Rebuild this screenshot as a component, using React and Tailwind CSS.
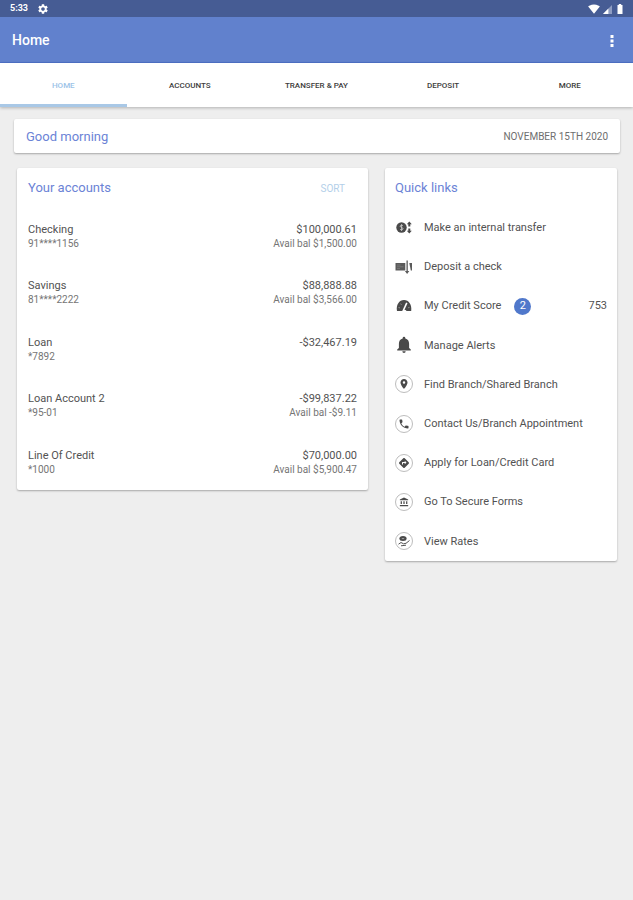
import React, { useState } from 'react';
import {
  MdAccountBalance,
  MdDirections,
  MdPhone,
  MdPlace,
  MdSettings,
  MdSignalWifi4Bar,
} from 'react-icons/md';

const tabs = ['Home', 'Accounts', 'Transfer & Pay', 'Deposit', 'More'];

const accounts = [
  { name: 'Checking', number: '91****1156', balance: '$100,000.61', available: '$1,500.00' },
  { name: 'Savings', number: '81****2222', balance: '$88,888.88', available: '$3,566.00' },
  { name: 'Loan', number: '*7892', balance: '-$32,467.19' },
  { name: 'Loan Account 2', number: '*95-01', balance: '-$99,837.22', available: '-$9.11' },
  { name: 'Line Of Credit', number: '*1000', balance: '$70,000.00', available: '$5,900.47' },
];

const SignalIcon = () => (
  <svg viewBox="0 0 10 10" className="size-[9px]">
    <path d="M10 0v10H0z" fill="#8f9dc2" />
    <path d="M6 4v6H0z" fill="#fff" />
  </svg>
);

const BatteryIcon = () => (
  <svg viewBox="0 0 6 10" className="h-[10px] w-[6px]" fill="#fff">
    <path d="M1.800 0h2.400v1H5.500v9h-5V1h1.300z" />
  </svg>
);

const MoreIcon = () => (
  <svg viewBox="0 0 4 12" className="h-3 w-1" fill="#fff">
    <path d="M.5 0h3v3h-3zM.5 4.500h3v3h-3zM.5 9h3v3h-3z" />
  </svg>
);

const TransferIcon = () => (
  <svg viewBox="0 0 18 18" className="size-[18px]" fill="#4a4a4a">
    <circle cx="6.5" cy="8.5" r="5.2" />
    <path d="M8 6.900C7.600 6 5.200 6 5.200 7.300s2.800 1 2.800 2.400-2.400 1.400-3 .4M6.600 5.200v6.800" fill="none" stroke="#ccc" strokeWidth=".9" />
    <path d="M14.300 2.500L16.800 5.300h-1.500v2.200h-2V5.300h-1.500zM14.300 14.500l-2.500-2.800h1.500V9.500h2v2.200h1.500z" />
  </svg>
);

const CheckIcon = () => (
  <svg viewBox="0 0 18 18" className="size-[18px]" fill="#5a5a5a">
    <path d="M.5 5h9.800v7.500H.5z" />
    <path d="M2 7h3.500M2 8.800h6.500M2 10.600h3" stroke="#8c8c8c" strokeWidth=".6" />
    <path d="M11.500 2.500h1.300V13h1.500l-2.200 3-2.200-3h1.600z" />
    <path d="M14.300 5H17v7.500h-1.200z" />
  </svg>
);

const GaugeIcon = () => (
  <svg viewBox="0 0 18 18" className="size-[18px]">
    <path d="M2 14C.8 7.800 4.300 3 9 3s8.200 4.800 7.200 11h-4.600a2.700 2.700 0 0 0-4.600 0z" fill="#4a4a4a" />
    <path d="M8.300 13.500L11.800 5.800" stroke="#fff" strokeWidth="1.600" />
    <path d="M3.500 10.500l1.500.4M5.600 6.600l.9 1.200M14.600 10.300l-1.500.5" stroke="#aaa" strokeWidth=".7" />
  </svg>
);

const BellIcon = () => (
  <svg viewBox="0 0 18 18" className="size-[18px]" fill="#4a4a4a">
    <path d="M9 .8a1.300 1.300 0 0 1 1.300 1.300v.5c2.500.6 3.800 2.600 3.800 5.200V12l1.700 1.500v1H2.200v-1L3.900 12V7.800c0-2.600 1.300-4.600 3.800-5.200v-.5A1.300 1.300 0 0 1 9 .8zM7.300 15.300h3.400a1.700 1.700 0 0 1-3.400 0z" />
  </svg>
);

const RatesIcon = () => (
  <svg viewBox="0 0 12 12" className="size-3">
    <ellipse cx="5" cy="3.600" rx="3.600" ry="2.500" fill="#4a4a4a" />
    <path d="M3.800 3.600h2.400" stroke="#bbb" strokeWidth=".8" />
    <path d="M.5 9.200L3 7.500 5.500 8.800 8 8.300 11.500 5.500M3 10.800l5-.6" fill="none" stroke="#555" strokeWidth="1" />
  </svg>
);

const Ring = ({ children }) => (
  <span className="flex size-[18px] items-center justify-center rounded-full border border-[#bdbdbd] text-[#4a4a4a]">
    {children}
  </span>
);

const links = [
  { label: 'Make an internal transfer', icon: <TransferIcon /> },
  { label: 'Deposit a check', icon: <CheckIcon /> },
  { label: 'My Credit Score', icon: <GaugeIcon />, badge: 2, value: '753' },
  { label: 'Manage Alerts', icon: <BellIcon /> },
  { label: 'Find Branch/Shared Branch', icon: <Ring><MdPlace className="size-3" /></Ring> },
  { label: 'Contact Us/Branch Appointment', icon: <Ring><MdPhone className="size-3" /></Ring> },
  { label: 'Apply for Loan/Credit Card', icon: <Ring><MdDirections className="size-3" /></Ring> },
  { label: 'Go To Secure Forms', icon: <Ring><MdAccountBalance className="size-[10px]" /></Ring> },
  { label: 'View Rates', icon: <Ring><RatesIcon /></Ring> },
];

const App = () => {
  const [activeTab, setActiveTab] = useState('Home');

  return (
    <div className="min-h-screen bg-[#eeeeee] font-['Roboto',sans-serif] text-[#525252]">
      <header>
        <div className="flex h-[17px] items-center justify-between bg-[#465c94] px-[10px] pt-px text-white">
          <div className="flex items-center gap-[9px]">
            <span className="text-[9px] font-bold">5:33</span>
            <MdSettings className="size-3" />
          </div>
          <div className="flex items-center gap-[3px]">
            <MdSignalWifi4Bar className="size-3" />
            <SignalIcon />
            <span className="pl-[2px]"><BatteryIcon /></span>
          </div>
        </div>
        <div className="flex h-[46px] items-center justify-between border-b border-[#4f72c9] bg-[#6181cd] px-3 pt-[2px] text-white">
          <h1 className="text-[14px] font-medium">Home</h1>
          <button type="button" aria-label="More options" className="flex w-[18px] justify-center">
            <MoreIcon />
          </button>
        </div>
        <nav className="grid h-11 grid-cols-5 bg-white shadow-[0_1px_3px_rgba(0,0,0,0.25)]">
          {tabs.map((tab) => (
            <button
              key={tab}
              type="button"
              onClick={() => setActiveTab(tab)}
              className={`border-b-3 pt-1 text-[8px] font-medium uppercase ${
                tab === activeTab ? 'border-[#a9c8e6] text-[#9cc3e8]' : 'border-transparent text-[#3c3c3c]'
              }`}
            >
              {tab}
            </button>
          ))}
        </nav>
      </header>

      <main className="pl-[14px] pr-[13px] pt-3">
        <section className="flex h-[34px] items-center justify-between rounded-xs bg-white px-3 pt-px shadow-[0_1px_2px_rgba(0,0,0,0.3)]">
          <h2 className="text-[13px] text-[#6b83d6]">Good morning</h2>
          <p className="text-[10px] uppercase text-[#6e6e6e]">November 15th 2020</p>
        </section>

        <div className="mt-[15px] grid grid-cols-[351fr_232fr] items-start gap-[17px] px-[3px]">
          <section className="rounded-xs bg-white shadow-[0_1px_2px_rgba(0,0,0,0.3)]">
            <div className="flex h-10 items-center justify-between pl-[11px] pr-[23px]">
              <h2 className="text-[13px] text-[#6b83d6]">Your accounts</h2>
              <button type="button" className="pt-px text-[10px] uppercase text-[#b3cfe9]">Sort</button>
            </div>
            <ul className="grid min-h-[282px] auto-rows-fr px-[11px]">
              {accounts.map((account) => (
                <li key={account.name} className="flex items-start justify-between pt-[15px]">
                  <div>
                    <p className="text-[11px] leading-[14px]">{account.name}</p>
                    <p className="text-[10px] leading-[14px] text-[#757575]">{account.number}</p>
                  </div>
                  <div className="text-right">
                    <p className="text-[11px] leading-[14px]">{account.balance}</p>
                    {account.available && (
                      <p className="text-[10px] leading-[14px] text-[#757575]">Avail bal {account.available}</p>
                    )}
                  </div>
                </li>
              ))}
            </ul>
          </section>

          <section className="rounded-xs bg-white shadow-[0_1px_2px_rgba(0,0,0,0.3)]">
            <h2 className="flex h-10 items-center px-[10px] text-[13px] text-[#6b83d6]">Quick links</h2>
            <ul className="grid min-h-[353px] auto-rows-fr">
              {links.map((link) => (
                <li key={link.label}>
                  <a href="#" className="flex h-full items-center px-[10px] text-[11px]">
                    <span className="mr-[11px] shrink-0">{link.icon}</span>
                    <span className="pt-px">{link.label}</span>
                    {link.badge && (
                      <span className="ml-[13px] flex size-[17px] items-center justify-center rounded-full bg-[#5078cb] text-white">
                        {link.badge}
                      </span>
                    )}
                    {link.value && <span className="ml-auto pt-px">{link.value}</span>}
                  </a>
                </li>
              ))}
            </ul>
          </section>
        </div>
      </main>
    </div>
  );
};

export default App;
